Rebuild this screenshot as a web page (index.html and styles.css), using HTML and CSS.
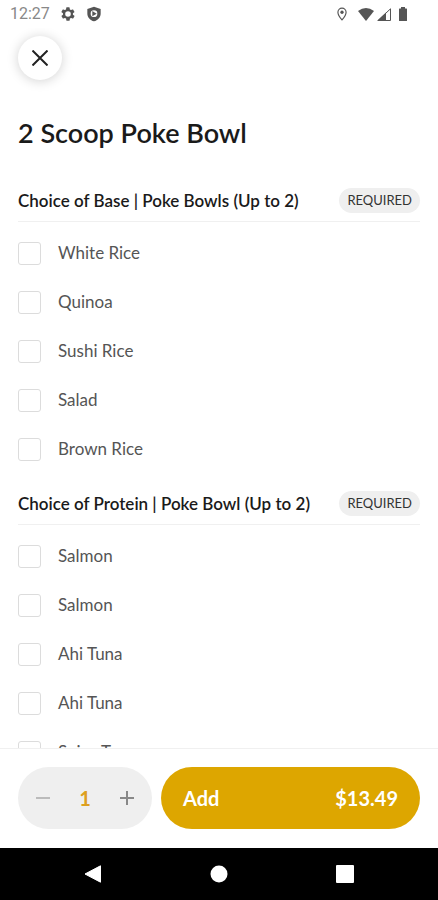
FILE: index.html
```html
<!DOCTYPE html>
<html lang="en">
<head>
<meta charset="utf-8">
<meta name="viewport" content="width=device-width, initial-scale=1">
<title>2 Scoop Poke Bowl</title>
<link rel="stylesheet" href="styles.css">
</head>
<body>
<div class="screen">
  <header class="status">
    <div class="status-group">
      <span class="clock">12:27</span>
      <svg class="status-icon gear" viewBox="0 0 24 24" aria-hidden="true"><path fill-rule="evenodd" d="M19.4 13a7.500 7.500 0 0 0 0-2l2.100-1.600a.5.5 0 0 0 .1-.6l-2-3.500a.5.5 0 0 0-.6-.2l-2.500 1a7.300 7.300 0 0 0-1.700-1l-.4-2.600a.5.5 0 0 0-.5-.5h-4a.5.5 0 0 0-.5.5l-.4 2.600a7.700 7.700 0 0 0-1.700 1l-2.500-1a.5.5 0 0 0-.6.2l-2 3.500a.5.5 0 0 0 .1.600L4.500 11a8 8 0 0 0 0 2l-2.100 1.600a.5.5 0 0 0-.1.600l2 3.500c.1.200.4.300.6.200l2.500-1a7.300 7.300 0 0 0 1.700 1l.4 2.600c0 .3.200.5.500.5h4c.3 0 .5-.2.500-.5l.4-2.600a7.700 7.700 0 0 0 1.700-1l2.500 1c.2.100.5 0 .6-.2l2-3.500a.5.5 0 0 0-.1-.6zM12 16.200a4.200 4.200 0 1 1 0-8.400 4.200 4.200 0 0 1 0 8.400z"/></svg>
      <svg class="status-icon" viewBox="0 0 24 24" aria-hidden="true"><path fill-rule="evenodd" d="M12 1 2 4.500v7C2 17 6.500 21.500 12 23c5.500-1.500 10-6 10-11.500v-7zM12 6.500a5 5 0 1 1 0 10 5 5 0 0 1 0-10z"/><path d="M9.500 7.500v8l6.500-4z"/></svg>
    </div>
    <div class="status-group right">
      <svg class="pin" viewBox="0 0 24 24" aria-hidden="true"><path d="M12 22s-7-7.500-7-13a7 7 0 0 1 14 0c0 5.500-7 13-7 13z" fill="none" stroke="#555" stroke-width="2"/><circle cx="12" cy="9" r="2.800"/></svg>
      <svg class="wifi" viewBox="0 0 16 13" aria-hidden="true"><path d="M0 3Q8-3 16 3L8 13z"/></svg>
      <svg class="signal" viewBox="0 0 14 13" aria-hidden="true"><path d="M13.500.8V12.500H1z" fill="none" stroke="#555"/><path d="M0 13 9 4.500V13z"/></svg>
      <svg class="battery" viewBox="0 0 10 14" aria-hidden="true"><path d="M3 0h4v1.500h1.500q.5 0 .5.500v11.500q0 .5-.5.500h-7Q1 14 1 13.500V2q0-.5.500-.5H3z"/></svg>
    </div>
  </header>

  <main class="content">
    <button class="close" type="button" aria-label="Close">
      <svg viewBox="0 0 16 16" aria-hidden="true"><path d="M0.500.5l15 15M15.500.5l-15 15"/></svg>
    </button>
    <h1>2 Scoop Poke Bowl</h1>

    <section>
      <div class="group-head"><h2>Choice of Base | Poke Bowls (Up to 2)</h2><span class="tag">REQUIRED</span></div>
      <label class="option"><input type="checkbox"><span>White Rice</span></label>
      <label class="option"><input type="checkbox"><span>Quinoa</span></label>
      <label class="option"><input type="checkbox"><span>Sushi Rice</span></label>
      <label class="option"><input type="checkbox"><span>Salad</span></label>
      <label class="option"><input type="checkbox"><span>Brown Rice</span></label>
    </section>

    <section>
      <div class="group-head"><h2>Choice of Protein | Poke Bowl (Up to 2)</h2><span class="tag">REQUIRED</span></div>
      <label class="option"><input type="checkbox"><span>Salmon</span></label>
      <label class="option"><input type="checkbox"><span>Salmon</span></label>
      <label class="option"><input type="checkbox"><span>Ahi Tuna</span></label>
      <label class="option"><input type="checkbox"><span>Ahi Tuna</span></label>
      <label class="option"><input type="checkbox"><span>Spicy Tuna</span></label>
    </section>
  </main>

  <footer class="order">
    <div class="stepper">
      <button class="minus" type="button" aria-label="Decrease quantity"><svg viewBox="0 0 14 14" aria-hidden="true"><path d="M0 7h14"/></svg></button>
      <span class="count">1</span>
      <button class="plus" type="button" aria-label="Increase quantity"><svg viewBox="0 0 14 14" aria-hidden="true"><path d="M0 7h14M7 0v14"/></svg></button>
    </div>
    <button class="add" type="button"><span>Add</span><span>$13.49</span></button>
  </footer>

  <nav class="system" aria-label="System">
    <button type="button" aria-label="Back"><svg viewBox="0 0 18 18" aria-hidden="true"><path d="M16.500.8v16.400L1 9z" stroke="#fff" stroke-linejoin="round"/></svg></button>
    <button type="button" aria-label="Home"><svg viewBox="0 0 18 18" aria-hidden="true"><circle cx="9" cy="9" r="8.500"/></svg></button>
    <button type="button" aria-label="Overview"><svg viewBox="0 0 18 18" aria-hidden="true"><rect width="18" height="18" rx="1"/></svg></button>
  </nav>
</div>
</body>
</html>
```

FILE: styles.css
```css
* {
  box-sizing: border-box;
}

body {
  margin: 0;
  background: #fff;
  color: #1a1a1a;
  font-family: Lato, "Liberation Sans", sans-serif;
}

button {
  border: 0;
  padding: 0;
  background: none;
  font: inherit;
}

svg {
  display: block;
}

.screen {
  display: flex;
  flex-direction: column;
  height: 100vh;
}

.status {
  display: flex;
  justify-content: space-between;
  flex: none;
  height: 28px;
  padding: 0 30px 0 10px;
}

.status-group {
  display: flex;
  align-items: center;
  gap: 10px;
}

.status svg {
  fill: #555;
}

.status-group.right {
  gap: 3px;
}

.clock {
  color: #888;
  font: 16px/28px Roboto, sans-serif;
}

.status-icon {
  width: 16px;
  height: 16px;
}

.pin {
  width: 14px;
  height: 14px;
  margin-right: 6px;
}

.wifi {
  width: 16px;
  height: 13px;
}

.signal {
  width: 14px;
  height: 13px;
}

.battery {
  width: 10px;
  height: 14px;
  margin-left: 4px;
}

.content {
  flex: 1;
  min-height: 0;
  overflow: hidden;
  padding: 8px 18px 0;
}

.close {
  display: grid;
  place-items: center;
  width: 44px;
  height: 44px;
  border-radius: 50%;
  background: #fff;
  box-shadow: 0 1px 12px rgba(0, 0, 0, 0.18);
}

.close svg {
  width: 16px;
  height: 16px;
  fill: none;
  stroke: #222;
  stroke-width: 2;
}

h1 {
  margin: 37px 0 22px;
  font-size: 27px;
  font-weight: 600;
  line-height: 32px;
}

section {
  padding-top: 17px;
}

.group-head {
  display: flex;
  align-items: center;
  justify-content: space-between;
  margin-bottom: 7px;
  padding-bottom: 8px;
  border-bottom: 1px solid #f0f0f0;
}

h2 {
  margin: 0;
  font-size: 17px;
  font-weight: 600;
  line-height: 25px;
}

.tag {
  padding: 0 8px;
  border-radius: 13px;
  background: #efefef;
  color: #333;
  font-size: 13px;
  line-height: 25px;
}

.option {
  display: flex;
  align-items: center;
  gap: 17px;
  height: 49px;
  color: #555;
  font-size: 17px;
  line-height: 20px;
}

.option span {
  padding-bottom: 2px;
}

.option input {
  appearance: none;
  width: 23px;
  height: 23px;
  margin: 0;
  border: 1px solid #dcdcdc;
  border-radius: 3px;
  background: #fff;
}

.option input:checked {
  background: #dda600;
}

.order {
  display: grid;
  grid-template-columns: 134fr 259fr;
  flex: none;
  gap: 9px;
  padding: 18px 18px 19px;
  border-top: 1px solid #f0f0f0;
}

.stepper {
  display: flex;
  align-items: center;
  justify-content: space-between;
  height: 62px;
  padding: 0 18px;
  border-radius: 31px;
  background: #efefef;
}

.stepper svg {
  width: 14px;
  height: 14px;
  stroke-width: 2;
}

.minus {
  stroke: #bbb;
}

.plus {
  stroke: #888;
}

.count {
  color: #dda020;
  font-size: 20px;
  font-weight: 700;
}

.add {
  display: flex;
  align-items: center;
  justify-content: space-between;
  height: 62px;
  padding: 0 22px;
  border-radius: 31px;
  background: #dda600;
  color: #fff;
  font-size: 20px;
  font-weight: 700;
}

.system {
  display: flex;
  align-items: center;
  justify-content: center;
  flex: none;
  gap: 108px;
  height: 52px;
  background: #000;
}

.system svg {
  width: 18px;
  height: 18px;
  fill: #fff;
}
```
